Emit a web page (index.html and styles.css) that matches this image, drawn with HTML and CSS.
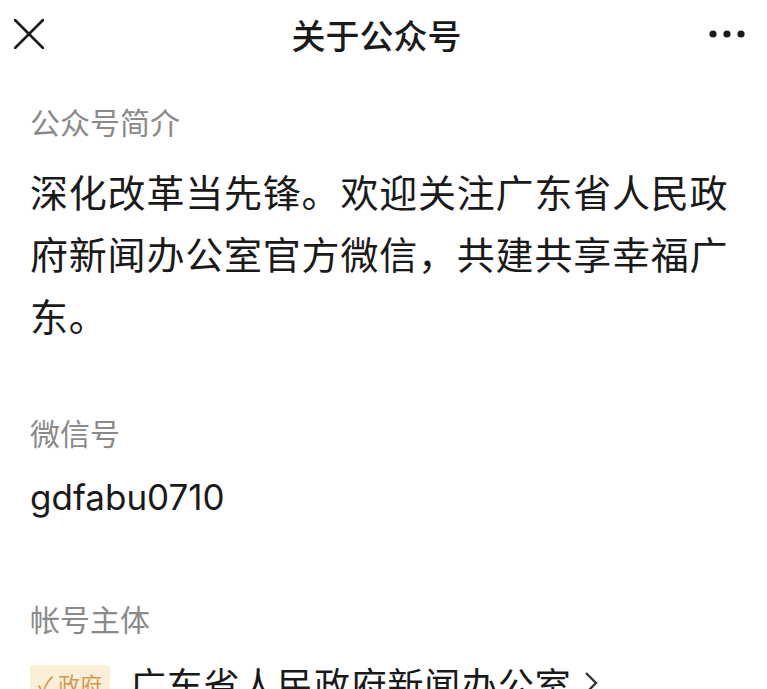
FILE: index.html
```html
<!DOCTYPE html>
<html lang="zh-CN">
<head>
    <meta charset="UTF-8">
    <title>关于公众号</title>
    <link rel="stylesheet" href="styles.css">
</head>
<body>

<div class="topbar">
    <svg class="close" width="30" height="30" viewBox="0 0 30 30">
        <path d="M1 1 L29 29 M29 1 L1 29" stroke="#1a1a1a" stroke-width="2.6" fill="none" stroke-linecap="round"/>
    </svg>
    <div class="title">关于公众号</div>
    <svg class="more" width="36" height="8" viewBox="0 0 36 8">
        <circle cx="4" cy="4" r="3.6" fill="#1a1a1a"/>
        <circle cx="18" cy="4" r="3.6" fill="#1a1a1a"/>
        <circle cx="32" cy="4" r="3.6" fill="#1a1a1a"/>
    </svg>
</div>

<div class="content">
    <div class="section intro">
        <div class="label">公众号简介</div>
        <p class="desc">深化改革当先锋。欢迎关注广东省人民政府新闻办公室官方微信，共建共享幸福广东。</p>
    </div>

    <div class="section wechat">
        <div class="label">微信号</div>
        <div class="value">gdfabu0710</div>
    </div>

    <div class="section owner">
        <div class="label">帐号主体</div>
        <div class="org">
            <span class="tag">✓ 政府</span>
            <span class="org-name">广东省人民政府新闻办公室</span>
            <svg class="chevron" width="14" height="24" viewBox="0 0 14 24">
                <path d="M2 2 L12 12 L2 22" stroke="#333" stroke-width="2.4" fill="none"/>
            </svg>
        </div>
    </div>
</div>

</body>
</html>
```

FILE: styles.css
```css
body {
    margin: 0;
    padding: 0;
    overflow: hidden;
    background-color: #ffffff;
    font-family: "Noto Sans CJK SC", sans-serif;
    color: #1a1a1a;
}

.topbar {
    height: 68px;
    display: flex;
    align-items: center;
    justify-content: space-between;
    padding: 0 22px 0 14px;
}

.title {
    font-size: 34px;
    font-weight: 500;
}

.content {
    padding: 0 30px;
}

/* 灰色小标题 */
.label {
    font-size: 30px;
    line-height: 40px;
    color: #8a8a8a;
}

.intro {
    margin-top: 33px;
}

.desc {
    margin: 19px 0 0;
    font-size: 38px;
    line-height: 62px;
    letter-spacing: 0.8px;
}

.wechat {
    margin-top: 66px;
}

.value {
    margin-top: 20px;
    font-family: Inter, "Noto Sans CJK SC", sans-serif;
    font-size: 35px;
    line-height: 50px;
}

.owner {
    margin-top: 76px;
}

.org {
    display: flex;
    align-items: center;
    margin-top: 14px;
    height: 62px;
}

.tag {
    background-color: #fcefd8;
    color: #d19a4e;
    font-size: 22px;
    padding: 2px 8px;
    border-radius: 3px;
    margin-right: 20px;
}

.org-name {
    font-size: 36px;
    letter-spacing: 0.8px;
}

.chevron {
    margin-left: 12px;
}
```
